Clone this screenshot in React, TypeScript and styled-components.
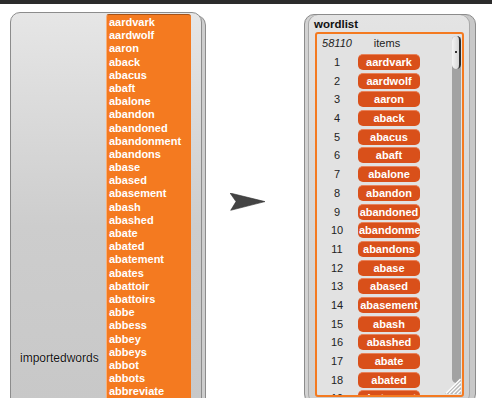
import styled, { createGlobalStyle } from "styled-components";

const allWords = [
  "aardvark", "aardwolf", "aaron", "aback", "abacus", "abaft", "abalone",
  "abandon", "abandoned", "abandonment", "abandons", "abase", "abased",
  "abasement", "abash", "abashed", "abate", "abated", "abatement", "abates",
  "abattoir", "abattoirs", "abbe", "abbess", "abbey", "abbeys", "abbot",
  "abbots", "abbreviate", "abbreviated",
];

const GlobalStyle = createGlobalStyle`
  html, body {
    margin: 0;
    padding: 0;
    background: #ffffff;
    height: 398px;
    overflow: hidden;
    font-family: "Liberation Sans", Arial, sans-serif;
  }
`;

const TopBar = styled.div`
  height: 4px;
  background: #2b2b2b;
`;

const Stage = styled.div`
  display: flex;
  align-items: flex-start;
  padding-left: 10px;
`;

const Watcher = styled.div`
  display: flex;
  width: 192px;
  height: 390px;
  margin-top: 8px;
  box-sizing: border-box;
  border: 1px solid #8c8c8c;
  border-radius: 10px 10px 0 0;
  background: linear-gradient(#e6e6e6, #cdcdcd 55%, #c8c8c8);
  box-shadow: 3px 3px 0 0 #cdcdcd, 4px 3px 0 0 #8c8c8c;
  overflow: hidden;
`;

const LabelCol = styled.div`
  width: 95px;
  display: flex;
  flex-direction: column;
  justify-content: flex-end;
  padding: 0 0 36px 9px;
  box-sizing: border-box;
`;

const Label = styled.span`
  font-size: 12px;
  line-height: 14px;
  color: #111;
  text-shadow: 0 0 1px #fff;
`;

const TextList = styled.div`
  width: 85px;
  margin-top: 1px;
  padding: 1px 2px;
  box-sizing: border-box;
  background: #f47a20;
  border-top: 1px solid #a65216;
  border-left: 1px solid #f9b07a;
  border-radius: 3px 3px 0 0;
  overflow: hidden;
`;

const TextLine = styled.div`
  font-size: 11px;
  font-weight: bold;
  line-height: 13.18px;
  color: #fff;
  white-space: nowrap;
`;

const ArrowCell = styled.div`
  width: 102px;
  padding: 189px 0 0 28px;
  box-sizing: border-box;
`;

const ListWatcher = styled.div`
  width: 172px;
  height: 390px;
  margin-top: 10px;
  box-sizing: border-box;
  border: 1px solid #8c8c8c;
  border-radius: 10px;
  background: linear-gradient(#e4e4e4, #d8d8d8 40%, #cfcfcf);
  box-shadow: inset 3px 0 0 #d2d2d2, inset 4px 0 0 #a8a8a8,
    inset -5px 0 0 #c8c8c8, inset -6px 0 0 #a8a8a8;
`;

const Title = styled.div`
  height: 17px;
  padding-left: 9px;
  font-size: 11.5px;
  font-weight: bold;
  line-height: 19px;
  color: #111;
`;

const ListBox = styled.div`
  position: relative;
  width: 149px;
  height: 365px;
  margin-left: 10px;
  box-sizing: border-box;
  border: 2px solid #f47a20;
  border-radius: 3px;
  background: #e2e2e2;
  overflow: hidden;
`;

const Row = styled.div`
  display: grid;
  grid-template-columns: 40px 62px;
  column-gap: 1px;
  align-items: center;
  height: 18.7px;
  font-size: 11px;
  color: #222;
`;

const Index = styled.span<{ $italic?: boolean }>`
  text-align: center;
  font-style: ${(p) => (p.$italic ? "italic" : "normal")};
`;

const Caption = styled.span`
  text-align: center;
  padding-right: 4px;
`;

const Pill = styled.span`
  display: block;
  height: 16px;
  box-sizing: border-box;
  padding: 0 1px;
  background: #d9501a;
  border-top: 1px solid #e8825a;
  border-radius: 5px;
  color: #fff;
  font-weight: bold;
  font-size: 11px;
  line-height: 15px;
  text-align: center;
  white-space: nowrap;
  overflow: hidden;
`;

const Track = styled.div`
  position: absolute;
  top: 2px;
  right: 1px;
  bottom: 12px;
  width: 9px;
  border-radius: 5px;
  background: #a2a2a2;
`;

const Thumb = styled.div`
  position: relative;
  height: 33px;
  box-sizing: border-box;
  border-radius: 5px;
  border-right: 2px solid #2e2e2e;
  background: linear-gradient(90deg, #f4f4f4, #d6d6d6);

  &::after {
    content: "";
    position: absolute;
    left: 3px;
    top: 15px;
    width: 2px;
    height: 2px;
    background: #333;
  }
`;

const Grip = styled.svg`
  position: absolute;
  right: 1px;
  bottom: 1px;
`;

function Arrow() {
  return (
    <svg width="36" height="18" viewBox="0 0 36 18">
      <path d="M0 0 L35 8.6 L0.7 17.3 L6 8.6 Z" fill="#444" stroke="#333" strokeWidth="0.6" strokeLinejoin="round" />
    </svg>
  );
}

export default function App() {
  return (
    <>
      <GlobalStyle />
      <TopBar />
      <Stage>
        <Watcher>
          <LabelCol>
            <Label>importedwords</Label>
          </LabelCol>
          <TextList>
            {allWords.map((w) => (
              <TextLine key={w}>{w}</TextLine>
            ))}
          </TextList>
        </Watcher>
        <ArrowCell>
          <Arrow />
        </ArrowCell>
        <ListWatcher>
          <Title>wordlist</Title>
          <ListBox>
            <Row>
              <Index $italic>58110</Index>
              <Caption>items</Caption>
            </Row>
            {allWords.slice(0, 20).map((w, i) => (
              <Row key={w}>
                <Index>{i + 1}</Index>
                <Pill>{w}</Pill>
              </Row>
            ))}
            <Track>
              <Thumb />
            </Track>
            <Grip width="16" height="16" viewBox="0 0 16 16">
              <path d="M16 0 L16 16 L0 16 Z" fill="#b8b8b8" />
              <path d="M4 16 L16 4 M8 16 L16 8 M12 16 L16 12 M1 15.5 L15.5 1" stroke="#ffffff" strokeWidth="1.4" />
            </Grip>
          </ListBox>
        </ListWatcher>
      </Stage>
    </>
  );
}
